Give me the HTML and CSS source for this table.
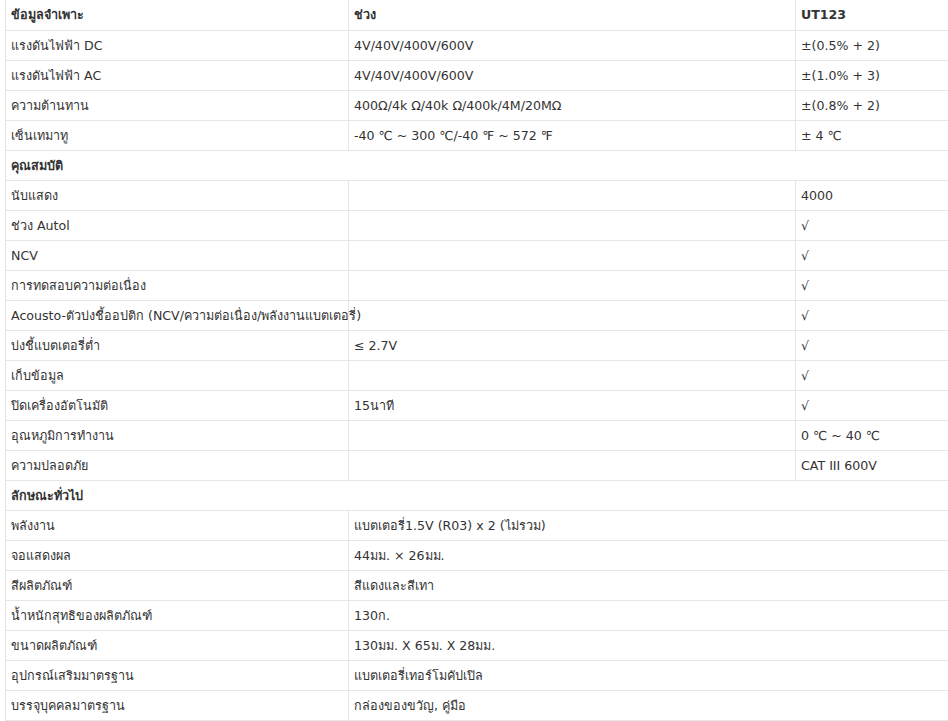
FILE: index.html
```html
<!DOCTYPE html>
<html lang="th">
<head>
<meta charset="utf-8">
<link rel="stylesheet" href="styles.css">
</head>
<body>
<table class="spec">
  <colgroup>
    <col class="c1"><col class="c2"><col class="c3">
  </colgroup>
  <tr class="head"><td>ข้อมูลจำเพาะ</td><td>ช่วง</td><td>UT123</td></tr>
  <tr><td>แรงดันไฟฟ้า DC</td><td>4V/40V/400V/600V</td><td>±(0.5% + 2)</td></tr>
  <tr><td>แรงดันไฟฟ้า AC</td><td>4V/40V/400V/600V</td><td>±(1.0% + 3)</td></tr>
  <tr><td>ความต้านทาน</td><td>400Ω/4k Ω/40k Ω/400k/4M/20MΩ</td><td>±(0.8% + 2)</td></tr>
  <tr><td>เซ็นเทมาทู</td><td>-40 ℃ ~ 300 ℃/-40 ℉ ~ 572 ℉</td><td>± 4 ℃</td></tr>
  <tr class="section"><td colspan="3">คุณสมบัติ</td></tr>
  <tr><td>นับแสดง</td><td></td><td>4000</td></tr>
  <tr><td>ช่วง Autol</td><td></td><td>√</td></tr>
  <tr><td>NCV</td><td></td><td>√</td></tr>
  <tr><td>การทดสอบความต่อเนื่อง</td><td></td><td>√</td></tr>
  <tr><td>Acousto-ตัวบ่งชี้ออปติก (NCV/ความต่อเนื่อง/พลังงานแบตเตอรี่)</td><td></td><td>√</td></tr>
  <tr><td>บ่งชี้แบตเตอรี่ต่ำ</td><td>≤ 2.7V</td><td>√</td></tr>
  <tr><td>เก็บข้อมูล</td><td></td><td>√</td></tr>
  <tr><td>ปิดเครื่องอัตโนมัติ</td><td>15นาที</td><td>√</td></tr>
  <tr><td>อุณหภูมิการทำงาน</td><td></td><td>0 ℃ ~ 40 ℃</td></tr>
  <tr><td>ความปลอดภัย</td><td></td><td>CAT III 600V</td></tr>
  <tr class="section"><td colspan="3">ลักษณะทั่วไป</td></tr>
  <tr><td>พลังงาน</td><td colspan="2">แบตเตอรี่1.5V (R03) x 2 (ไม่รวม)</td></tr>
  <tr><td>จอแสดงผล</td><td colspan="2">44มม. × 26มม.</td></tr>
  <tr><td>สีผลิตภัณฑ์</td><td colspan="2">สีแดงและสีเทา</td></tr>
  <tr><td>น้ำหนักสุทธิของผลิตภัณฑ์</td><td colspan="2">130ก.</td></tr>
  <tr><td>ขนาดผลิตภัณฑ์</td><td colspan="2">130มม. X 65ม. X 28มม.</td></tr>
  <tr><td>อุปกรณ์เสริมมาตรฐาน</td><td colspan="2">แบตเตอรี่เทอร์โมคัปเปิล</td></tr>
  <tr><td>บรรจุบุคคลมาตรฐาน</td><td colspan="2">กล่องของขวัญ, คู่มือ</td></tr>
</table>
</body>
</html>
```
FILE: styles.css
```css
html, body {
  margin: 0;
  padding: 0;
  background: #fff;
}
body {
  font-family: "DejaVu Sans", "Noto Sans", sans-serif;
  font-size: 12.6px;
  color: #333;
}
.spec {
  border-collapse: collapse;
  table-layout: fixed;
  width: 943px;
  margin-left: 5px;
}
.spec .c1 { width: 343px; }
.spec .c2 { width: 447px; }
.spec .c3 { width: 153px; }
.spec td {
  height: 30px;
  padding: 1px 5px 0;
  border: 1px solid #e6e6e6;
  border-top: 0;
  vertical-align: middle;
  white-space: nowrap;
  box-sizing: border-box;
  line-height: 16px;
}
.spec td:last-child {
  border-right: 0;
}
.spec .head td,
.spec .section td {
  font-weight: bold;
}
```
